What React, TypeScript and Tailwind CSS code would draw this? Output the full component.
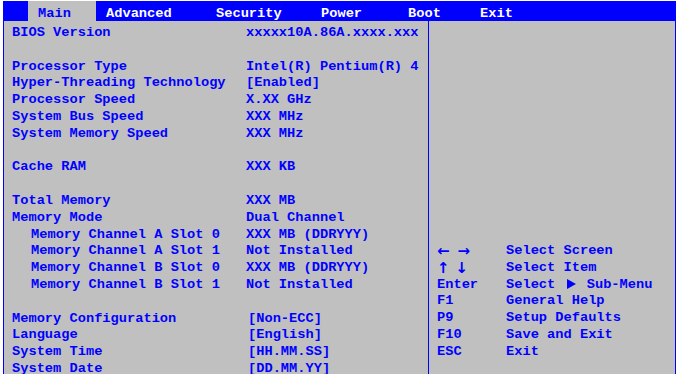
const font = { fontFamily: '"Liberation Mono", "Courier New", monospace' };

type Row = { label?: string; value?: string; indent?: boolean; bracket?: boolean };

const rows: Row[] = [
  { label: "BIOS Version", value: "xxxxx10A.86A.xxxx.xxx" },
  {},
  { label: "Processor Type", value: "Intel(R) Pentium(R) 4" },
  { label: "Hyper-Threading Technology", value: "[Enabled]" },
  { label: "Processor Speed", value: "X.XX GHz" },
  { label: "System Bus Speed", value: "XXX MHz" },
  { label: "System Memory Speed", value: "XXX MHz" },
  {},
  { label: "Cache RAM", value: "XXX KB" },
  {},
  { label: "Total Memory", value: "XXX MB" },
  { label: "Memory Mode", value: "Dual Channel" },
  { label: "Memory Channel A Slot 0", value: "XXX MB (DDRYYY)", indent: true },
  { label: "Memory Channel A Slot 1", value: "Not Installed", indent: true },
  { label: "Memory Channel B Slot 0", value: "XXX MB (DDRYYY)", indent: true },
  { label: "Memory Channel B Slot 1", value: "Not Installed", indent: true },
  {},
  { label: "Memory Configuration", value: "[Non-ECC]", bracket: true },
  { label: "Language", value: "[English]", bracket: true },
  { label: "System Time", value: "[HH.MM.SS]", bracket: true },
  { label: "System Date", value: "[DD.MM.YY]", bracket: true },
];

const tabs = [
  { name: "Main", w: "w-[68px]", active: true },
  { name: "Advanced", w: "w-[110px]" },
  { name: "Security", w: "w-[105px]" },
  { name: "Power", w: "w-[87px]" },
  { name: "Boot", w: "w-[72px]" },
  { name: "Exit", w: "flex-1" },
];

function Triangle() {
  return (
    <svg width="9" height="10" viewBox="0 0 9 10" className="mx-[3px] inline-block align-[-1px]">
      <polygon points="0,0 9,5 0,10" fill="#0000ff" />
    </svg>
  );
}

function Arrows({ a, b, gap }: { a: string; b: string; gap: string }) {
  return (
    <span className={`flex ${gap} font-['DejaVu_Sans',sans-serif] text-[15px] font-bold`}>
      <span>{a}</span>
      <span>{b}</span>
    </span>
  );
}

const help: { key: React.ReactNode; desc: React.ReactNode }[] = [
  { key: <Arrows a="←" b="→" gap="gap-[8px]" />, desc: "Select Screen" },
  { key: <Arrows a="↑" b="↓" gap="gap-[6px]" />, desc: "Select Item" },
  {
    key: "Enter",
    desc: (
      <>
        Select <Triangle /> Sub-Menu
      </>
    ),
  },
  { key: "F1", desc: "General Help" },
  { key: "P9", desc: "Setup Defaults" },
  { key: "F10", desc: "Save and Exit" },
  { key: "ESC", desc: "Exit" },
];

export default function App() {
  return (
    <div className="h-[374px] w-[679px] overflow-hidden bg-white pl-[3px] pt-[1px]" style={font}>
      <div className="w-[673px] text-[13.7px] font-bold leading-[16.8px] text-[#0000ff]">
        <div className="flex h-[20px] bg-[#0000ff]">
          <div className="w-[25px]" />
          {tabs.map((t) => (
            <div
              key={t.name}
              className={`${t.w} flex items-center pl-[10px] pt-[7px] ${t.active ? "bg-[#c0c0c0] text-[#0000ff]" : "text-white"}`}
            >
              {t.name}
            </div>
          ))}
        </div>
        <div className="flex h-[360px] border-x border-[#0000ff] bg-[#c0c0c0]">
          <div className="w-[425px] border-r border-[#0000ff] pt-[4px]">
            {rows.map((r, i) => (
              <div key={i} className="grid h-[16.8px] grid-cols-[242px_1fr] whitespace-pre">
                <span className={r.indent ? "pl-[27px]" : "pl-[8px]"}>{r.label ?? ""}</span>
                <span className={r.bracket ? "pl-[2px]" : ""}>{r.value ?? ""}</span>
              </div>
            ))}
          </div>
          <div className="flex-1 pt-[222px]">
            {help.map((h, i) => (
              <div key={i} className="grid h-[16.8px] grid-cols-[69px_1fr] items-center whitespace-pre pl-[8px]">
                <span>{h.key}</span>
                <span>{h.desc}</span>
              </div>
            ))}
          </div>
        </div>
      </div>
    </div>
  );
}
